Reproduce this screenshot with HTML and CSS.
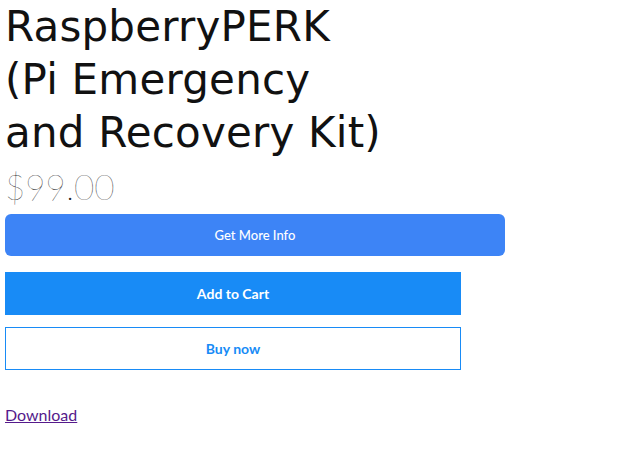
FILE: index.html
```html
<!DOCTYPE html>
<html>
<head>
<meta charset="utf-8">
<link rel="stylesheet" href="styles.css">
</head>
<body>
<div class="product">
  <h1 class="title">RaspberryPERK<br>(Pi Emergency<br>and Recovery Kit)</h1>
  <div class="price">$99.00</div>
  <button class="btn btn-info">Get More Info</button>
  <div class="cart-actions">
    <button class="btn btn-cart">Add to Cart</button>
    <button class="btn btn-buy">Buy now</button>
  </div>
  <a class="download" href="#dl">Download</a>
</div>
</body>
</html>
```
FILE: styles.css
```css
html, body {
  margin: 0;
  padding: 0;
  background: #fff;
}
.product {
  padding: 0 5px;
  display: flex;
  flex-direction: column;
  align-items: flex-start;
}
.title {
  margin: 0;
  font-family: "DejaVu Sans", sans-serif;
  font-weight: 400;
  font-size: 42px;
  line-height: 53px;
  color: #111;
  letter-spacing: 0.2px;
}
.price {
  margin-top: 7px;
  font-family: "Lato", sans-serif;
  font-weight: 100;
  font-size: 35px;
  line-height: 40px;
  color: #222;
}
.btn {
  font-family: "Lato", sans-serif;
  cursor: pointer;
  border: none;
}
.btn-info {
  margin-top: 8px;
  width: 500px;
  height: 42px;
  background: #3d84f6;
  color: #fff;
  border-radius: 6px;
  font-size: 13px;
  font-weight: 500;
}
.cart-actions {
  margin-top: 16px;
  display: flex;
  flex-direction: column;
  gap: 12px;
}
.btn-cart {
  width: 456px;
  height: 43px;
  background: #188bf6;
  color: #fff;
  font-size: 14px;
  font-weight: 700;
}
.btn-buy {
  width: 456px;
  height: 43px;
  background: #fff;
  border: 1px solid #188bf6;
  color: #188bf6;
  font-size: 14px;
  font-weight: 700;
}
.download {
  margin-top: 35px;
  font-family: "Lato", sans-serif;
  font-size: 16px;
  color: #551a8b;
}
```
